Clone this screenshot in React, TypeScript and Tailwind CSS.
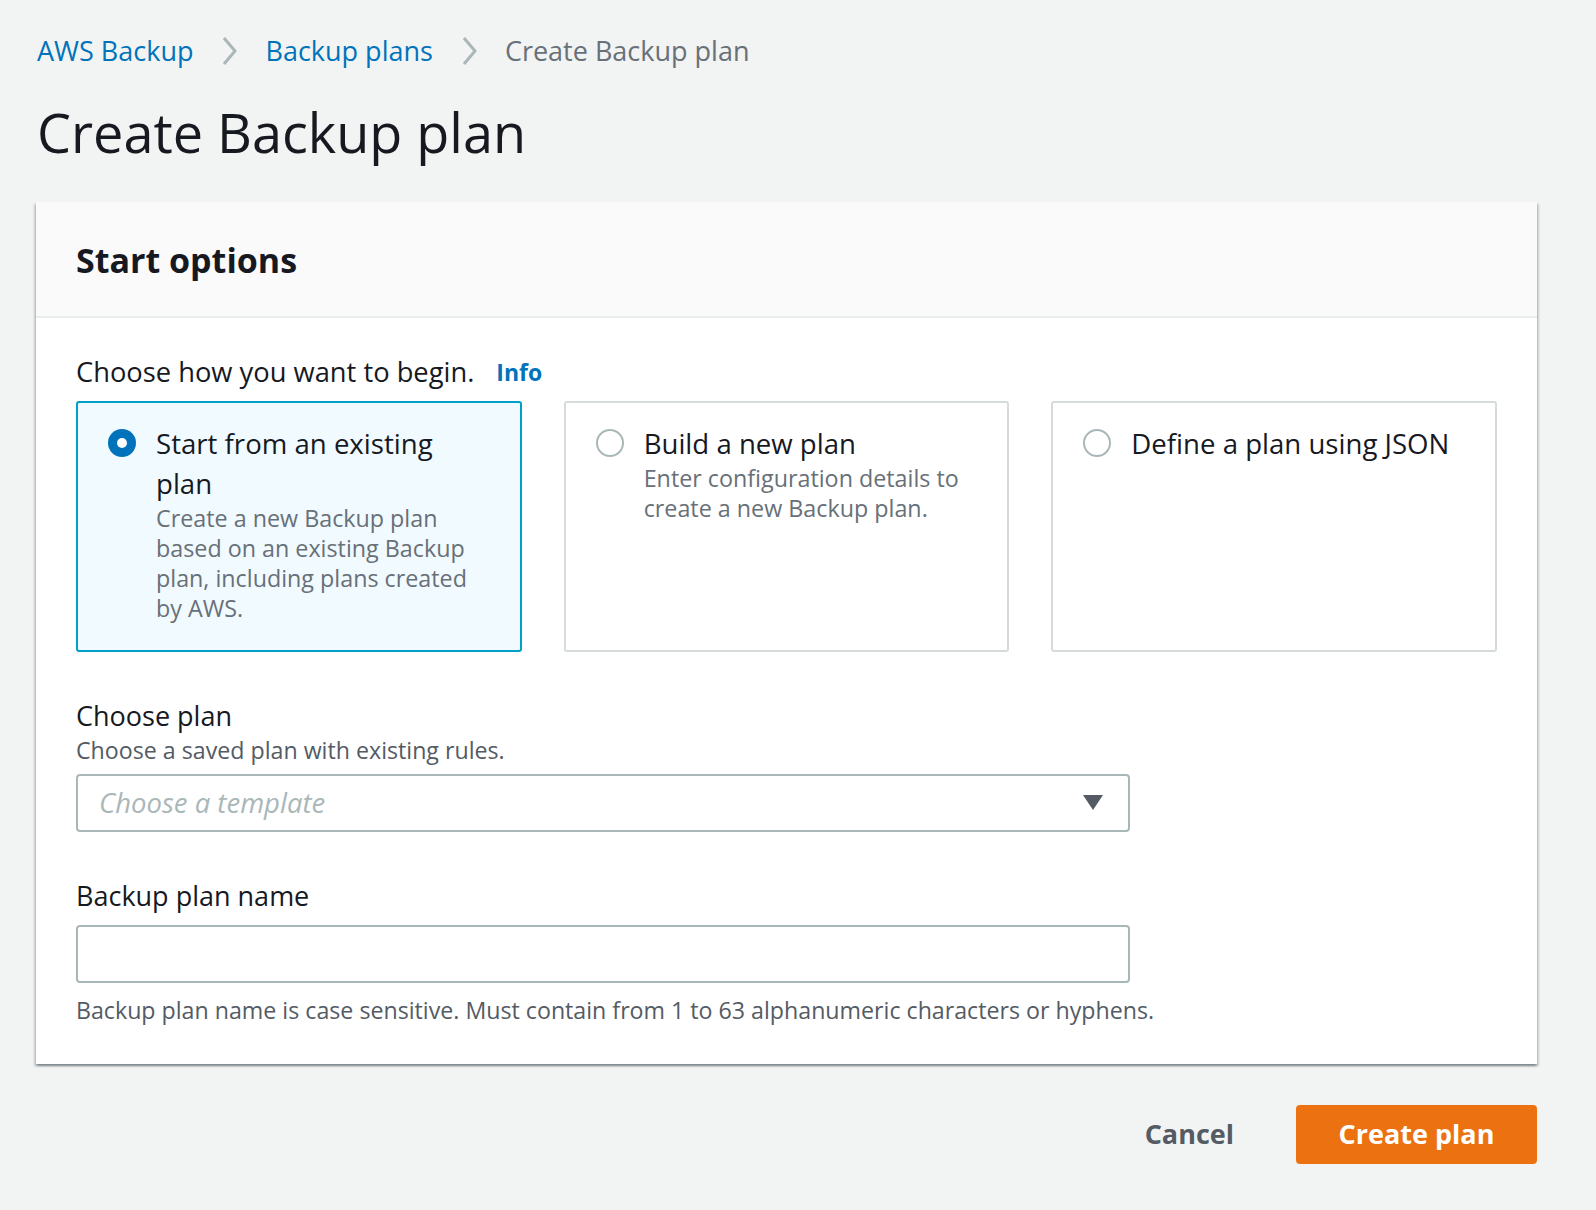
import React from "react";

const F = "font-['Open_Sans',sans-serif]";

function Chevron() {
  return (
    <svg width="18" height="32" viewBox="0 0 18 32" className="mx-[27px]">
      <path d="M4 3 L15 16 L4 29" fill="none" stroke="#aab7b8" strokeWidth="3" />
    </svg>
  );
}

function Radio({ checked }: { checked: boolean }) {
  return checked ? (
    <div className="w-[28px] h-[28px] rounded-full bg-[#0073bb] flex items-center justify-center shrink-0 mt-[6px]">
      <div className="w-[10px] h-[10px] rounded-full bg-white" />
    </div>
  ) : (
    <div className="w-[28px] h-[28px] rounded-full border-2 border-[#aab7b8] bg-white shrink-0 mt-[6px]" />
  );
}

function Tile({
  checked,
  title,
  desc,
}: {
  checked: boolean;
  title: string[];
  desc: string[];
}) {
  return (
    <div
      className={
        checked
          ? "border-2 border-[#00a1c9] bg-[#f1faff] rounded-[3px] h-[251px] pl-[30px] pt-[20px] flex gap-[20px]"
          : "border-2 border-[#d5dbdb] bg-white rounded-[3px] h-[251px] pl-[30px] pt-[20px] flex gap-[20px]"
      }
    >
      <Radio checked={checked} />
      <div>
        {title.map((t) => (
          <div key={t} className="text-[27.6px] leading-[40px] text-[#16191f] whitespace-nowrap">
            {t}
          </div>
        ))}
        {desc.map((t) => (
          <div key={t} className="text-[23.3px] leading-[30px] text-[#687078] whitespace-nowrap">
            {t}
          </div>
        ))}
      </div>
    </div>
  );
}

export default function App() {
  return (
    <div className={`${F} bg-[#f2f3f3] min-h-[1210px] w-full pl-[36px] pt-[33px]`}>
      <div className="w-[1501px]">
        <nav className="flex items-center h-[36px] text-[27px] pl-[1px]">
          <span className="text-[#0073bb]">AWS Backup</span>
          <Chevron />
          <span className="text-[#0073bb]">Backup plans</span>
          <Chevron />
          <span className="text-[#687078]">Create Backup plan</span>
        </nav>
        <h1 className="mt-[31px] text-[54px] leading-[64px] text-[#16191f] pl-[1px]">Create Backup plan</h1>

        <div className="mt-[38px] bg-white shadow-[0_2px_2px_0_rgba(0,28,36,0.3),2px_2px_2px_0_rgba(0,28,36,0.15),-2px_2px_2px_0_rgba(0,28,36,0.15)]">
          <div className="h-[116px] bg-[#fafafa] border-b-2 border-[#eaeded] flex items-center pl-[40px] pt-[3px]">
            <h2 className="text-[34px] font-bold text-[#16191f]">Start options</h2>
          </div>
          <div className="px-[40px] pt-[36px] pb-[38px]">
            <div className="flex items-center gap-[22px] h-[36px]">
              <span className="text-[27.3px] text-[#16191f]">Choose how you want to begin.</span>
              <span className="text-[23px] font-bold text-[#0073bb]">Info</span>
            </div>
            <div className="grid grid-cols-3 gap-[42px] mt-[11px]">
              <Tile
                checked
                title={["Start from an existing", "plan"]}
                desc={[
                  "Create a new Backup plan",
                  "based on an existing Backup",
                  "plan, including plans created",
                  "by AWS.",
                ]}
              />
              <Tile
                checked={false}
                title={["Build a new plan"]}
                desc={["Enter configuration details to", "create a new Backup plan."]}
              />
              <Tile checked={false} title={["Define a plan using JSON"]} desc={[]} />
            </div>

            <div className="mt-[46px] w-[1054px]">
              <div className="text-[27px] leading-[36px] text-[#16191f]">Choose plan</div>
              <div className="text-[23.2px] leading-[32px] text-[#545b64]">Choose a saved plan with existing rules.</div>
              <div className="mt-[8px] h-[58px] border-2 border-[#aab7b8] rounded-[4px] flex items-center justify-between pl-[21px] pr-[25px]">
                <span className="text-[27.5px] italic text-[#aab7b8]">Choose a template</span>
                <svg width="20" height="16" viewBox="0 0 20 16">
                  <path d="M0 0 H20 L10 15 Z" fill="#545b64" />
                </svg>
              </div>

              <div className="mt-[46px] text-[27px] leading-[36px] text-[#16191f]">Backup plan name</div>
              <div className="mt-[11px] h-[58px] border-2 border-[#aab7b8] rounded-[4px] bg-white" />
              <div className="mt-[11px] text-[23.2px] leading-[32px] text-[#545b64] whitespace-nowrap">
                Backup plan name is case sensitive. Must contain from 1 to 63 alphanumeric characters or hyphens.
              </div>
            </div>
          </div>
        </div>

        <div className="flex justify-end items-center mt-[41px] gap-[62px]">
          <span className="text-[27px] font-bold text-[#545b64]">Cancel</span>
          <button className="h-[59px] w-[241px] bg-[#ec7211] rounded-[4px] text-white text-[27px] font-bold">
            Create plan
          </button>
        </div>
      </div>
    </div>
  );
}
